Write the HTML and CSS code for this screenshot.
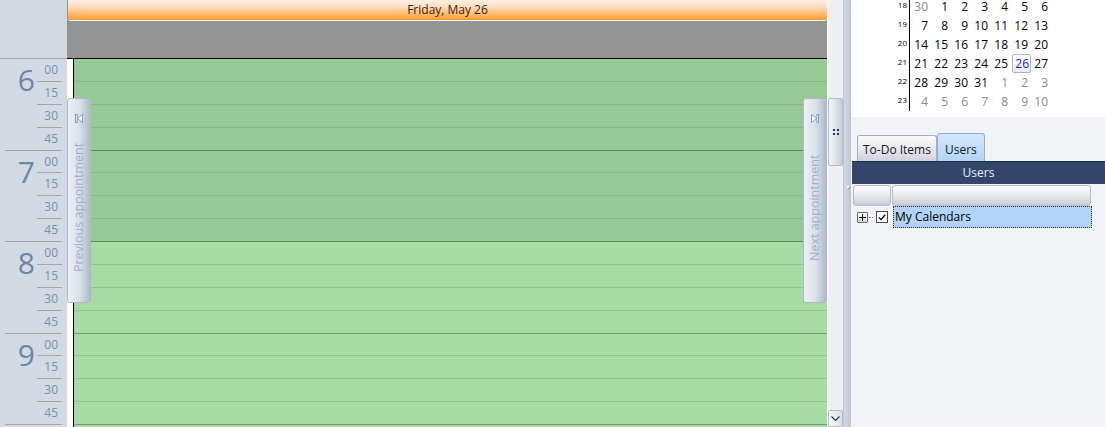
FILE: index.html
```html
<!DOCTYPE html>
<html>
<head>
    <title>Day View</title>
    <link rel="stylesheet" href="styles.css">
</head>
<body>
<div class="app">
    <div class="ruler">
        <div class="ruler-head"></div>
        <div class="hour"><div class="hour-num">6</div><div class="mins"><div class="min">00</div><div class="min">15</div><div class="min">30</div><div class="min">45</div></div></div>
        <div class="hour"><div class="hour-num">7</div><div class="mins"><div class="min">00</div><div class="min">15</div><div class="min">30</div><div class="min">45</div></div></div>
        <div class="hour"><div class="hour-num">8</div><div class="mins"><div class="min">00</div><div class="min">15</div><div class="min">30</div><div class="min">45</div></div></div>
        <div class="hour"><div class="hour-num">9</div><div class="mins"><div class="min">00</div><div class="min">15</div><div class="min">30</div><div class="min">45</div></div></div>
    </div>

    <div class="day">
        <div class="day-head">
            <div class="day-title">Friday, May 26</div>
        </div>
        <div class="day-body">
            <div class="strip"></div>
            <div class="slots">
                <div class="slot off"></div><div class="slot off"></div><div class="slot off"></div><div class="slot off hr"></div>
                <div class="slot off"></div><div class="slot off"></div><div class="slot off"></div><div class="slot off hr"></div>
                <div class="slot"></div><div class="slot"></div><div class="slot"></div><div class="slot hr"></div>
                <div class="slot"></div><div class="slot"></div><div class="slot"></div><div class="slot hr"></div>
                <div class="slot"></div><div class="slot"></div><div class="slot"></div><div class="slot hr"></div>
            </div>

            <div class="nav-btn prev">
                <svg class="nav-ico" width="8" height="9" viewBox="0 0 8 9">
                    <rect x="0.5" y="0.5" width="1.6" height="8" fill="#fff" stroke="#7585a3" stroke-width="0.8"/>
                    <polygon points="7.5,0.5 2.6,4.5 7.5,8.5" fill="#fff" stroke="#7585a3" stroke-width="0.8"/>
                </svg>
                <div class="nav-text">Previous appointment</div>
            </div>
            <div class="nav-btn next">
                <svg class="nav-ico" width="8" height="9" viewBox="0 0 8 9">
                    <polygon points="0.5,0.5 5.4,4.5 0.5,8.5" fill="#fff" stroke="#7585a3" stroke-width="0.8"/>
                    <rect x="5.9" y="0.5" width="1.6" height="8" fill="#fff" stroke="#7585a3" stroke-width="0.8"/>
                </svg>
                <div class="nav-text">Next appointment</div>
            </div>
        </div>
    </div>

    <div class="vscroll">
        <div class="thumb">
            <svg width="6" height="6" viewBox="0 0 6 6">
                <rect x="0" y="0" width="2" height="2" fill="#2e3646"/><rect x="4" y="0" width="2" height="2" fill="#2e3646"/>
                <rect x="0" y="4" width="2" height="2" fill="#2e3646"/><rect x="4" y="4" width="2" height="2" fill="#2e3646"/>
            </svg>
        </div>
        <div class="scroll-btn">
            <svg width="9" height="6" viewBox="0 0 9 6"><polyline points="0.5,0.5 4.5,4.5 8.5,0.5" fill="none" stroke="#3a3a3a" stroke-width="1.2"/></svg>
        </div>
    </div>

    <div class="splitter"><span class="split-dot"></span></div>

    <div class="side">
        <div class="minical">
            <div class="cal-grid">
                <div class="wk">18</div><div class="d other">30</div><div class="d">1</div><div class="d">2</div><div class="d">3</div><div class="d">4</div><div class="d">5</div><div class="d">6</div>
                <div class="wk">19</div><div class="d">7</div><div class="d">8</div><div class="d">9</div><div class="d">10</div><div class="d">11</div><div class="d">12</div><div class="d">13</div>
                <div class="wk">20</div><div class="d">14</div><div class="d">15</div><div class="d">16</div><div class="d">17</div><div class="d">18</div><div class="d">19</div><div class="d">20</div>
                <div class="wk">21</div><div class="d">21</div><div class="d">22</div><div class="d">23</div><div class="d">24</div><div class="d">25</div><div class="d today">26</div><div class="d">27</div>
                <div class="wk">22</div><div class="d">28</div><div class="d">29</div><div class="d">30</div><div class="d">31</div><div class="d other">1</div><div class="d other">2</div><div class="d other">3</div>
                <div class="wk">23</div><div class="d other">4</div><div class="d other">5</div><div class="d other">6</div><div class="d other">7</div><div class="d other">8</div><div class="d other">9</div><div class="d other">10</div>
            </div>
        </div>

        <div class="tabs">
            <div class="tab">To-Do Items</div>
            <div class="tab active">Users</div>
        </div>
        <div class="users-bar">Users</div>
        <div class="grid-head">
            <div class="col-head first"></div>
            <div class="col-head name"></div>
        </div>
        <div class="grid-row">
            <span class="expander">
                <svg width="7" height="7" viewBox="0 0 7 7"><path d="M0 3.5H7M3.5 0V7" stroke="#000" stroke-width="1"/></svg>
            </span>
            <span class="connector"></span>
            <span class="check">
                <svg width="8" height="7" viewBox="0 0 8 7"><polyline points="0.8,3.4 3,5.6 7.2,0.8" fill="none" stroke="#000" stroke-width="1.3"/></svg>
            </span>
            <span class="cal-name">My Calendars</span>
        </div>
    </div>
</div>
</body>
</html>
```

FILE: styles.css
```css
body {
    margin: 0;
    font-family: "Open Sans", "Noto Sans", sans-serif;
    font-size: 12px;
    overflow: hidden;
}
.app {
    display: flex;
    width: 1105px;
    height: 427px;
    overflow: hidden;
}

/* time ruler */
.ruler {
    width: 67px;
    flex: none;
    background: #d2dae4;
}
.ruler-head {
    height: 58px;
    border-bottom: 1px solid #a7abb1;
}
.hour {
    display: flex;
    margin-left: 5px;
    width: 57px;
    height: 91.5px;
    box-sizing: border-box;
    border-bottom: 1px solid #a3a6ab;
}
.hour-num {
    width: 32px;
    box-sizing: border-box;
    padding: 6px 2px 0 0;
    text-align: right;
    font-size: 30px;
    line-height: 30px;
    color: #6f86a7;
}
.mins {
    width: 25px;
}
.min {
    height: 22.875px;
    box-sizing: border-box;
    border-bottom: 1px solid #a3a6ab;
    padding-right: 4px;
    text-align: right;
    line-height: 22px;
    color: #7a90b0;
}
.min:last-child {
    height: 21.5px;
    border-bottom: none;
}

/* day column */
.day {
    width: 760px;
    flex: none;
    display: flex;
    flex-direction: column;
}
.day-head {
    height: 58px;
    border-bottom: 1px solid #000;
    background: #949494;
}
.day-title {
    height: 20px;
    margin-left: 1px;
    border-bottom: 1px solid #fff;
    border-radius: 0 0 3px 3px;
    background: linear-gradient(#fdeee6 0%, #ffe0c4 30%, #ffc27e 62%, #ff9c2c 100%);
    text-align: center;
    line-height: 20px;
    color: #3a1c1c;
}
.day-body {
    flex: 1;
    display: flex;
    position: relative;
    overflow: hidden;
}
.strip {
    width: 6px;
    background: #fff;
    border-right: 1px solid #000;
}
.slots {
    flex: 1;
}
.slot {
    height: 22.875px;
    box-sizing: border-box;
    background: #a7dca4;
    border-bottom: 1px solid #90c48d;
}
.slot.hr {
    border-bottom-color: #6f9d6c;
}
.slot.off {
    background: #96c994;
    border-bottom-color: #84b681;
}
.slot.off.hr {
    border-bottom-color: #5f8a5c;
}

.nav-btn {
    position: absolute;
    top: 39px;
    width: 24px;
    height: 205px;
    box-sizing: border-box;
    border: 1px solid #aeb8c8;
    border-radius: 3px;
    background: linear-gradient(to right, #eef1f6, #d9dfe8 55%, #aebacb);
    display: flex;
    flex-direction: column;
    align-items: center;
    padding-top: 15px;
}
.nav-btn.prev {
    left: 0;
}
.nav-btn.next {
    right: 0;
}
.nav-ico {
    display: block;
}
.nav-text {
    flex: 1;
    writing-mode: vertical-rl;
    transform: rotate(180deg);
    text-align: center;
    font-size: 12.5px;
    line-height: 20px;
    color: #a4b0c5;
    padding-top: 10px;
}

/* scrollbar + splitter */
.vscroll {
    width: 15px;
    flex: none;
    border-left: 1px solid #fff;
    border-right: 1px solid #bcc5d2;
    background: #eef0f4;
    display: flex;
    flex-direction: column;
}
.thumb {
    margin-top: 98px;
    height: 68px;
    box-sizing: border-box;
    border: 1px solid #b3bccb;
    border-radius: 2px;
    background: linear-gradient(to right, #f6f7fa, #dfe4eb 50%, #c5cdd9);
    display: flex;
    align-items: center;
    justify-content: center;
}
.scroll-btn {
    margin-top: auto;
    height: 17px;
    box-sizing: border-box;
    border: 1px solid #b3bccb;
    border-radius: 2px;
    background: linear-gradient(to right, #f6f7fa, #dce1e9);
    display: flex;
    align-items: center;
    justify-content: center;
}
.splitter {
    width: 7px;
    flex: none;
    background: linear-gradient(to right, #d3dae4, #bcc6d3);
}
.split-dot {
    display: block;
    width: 2px;
    height: 2px;
    margin: 186px 0 0 3px;
    background: #fff;
    box-shadow: 1px 1px 0 #8e9aab;
}

/* side panel */
.side {
    flex: 1;
    background: #f2f3f6;
}
.minical {
    height: 117px;
    background: #fff;
    padding-left: 36px;
    overflow: hidden;
}
.cal-grid {
    display: grid;
    grid-template-columns: 23px repeat(7, 20px);
    grid-template-rows: 16px;
    grid-auto-rows: 19px;
}
.wk {
    box-sizing: border-box;
    border-right: 1px solid #000;
    padding-right: 2px;
    text-align: right;
    font-size: 8px;
    line-height: 16px;
    color: #000;
}
.d {
    padding-right: 2px;
    text-align: right;
    line-height: 19px;
    color: #000;
}
/* first row is cut by the top edge */
.cal-grid > .wk:first-child {
    line-height: 10px;
}
.cal-grid > .d:nth-child(-n+8) {
    line-height: 13px;
}
.d.other {
    color: #8a8a8a;
}
.d.today {
    margin: 0 -1px 0 2px;
    box-sizing: border-box;
    border: 1px solid #a6b6cd;
    border-radius: 2px;
    padding-right: 1px;
    line-height: 17px;
    background: linear-gradient(#fff, #e8eef6);
    color: #1a1ae6;
}

.tabs {
    height: 44px;
    display: flex;
    align-items: flex-end;
    padding-left: 6px;
}
.tab {
    height: 26px;
    box-sizing: border-box;
    border: 1px solid #a7afbb;
    border-bottom: none;
    border-radius: 3px 3px 0 0;
    padding: 4px 5px 0 5px;
    line-height: 20px;
    background: linear-gradient(#fbfbfc, #e9eaed 50%, #cfd3da);
    color: #1a1a1a;
}
.tab.active {
    height: 28px;
    padding: 6px 7px 0 7px;
    border-color: #8fb0d6;
    background: linear-gradient(#d3e7fb, #b3d4f6);
}
.users-bar {
    height: 23px;
    margin-left: 1px;
    box-sizing: border-box;
    border-top: 1px solid #1f2d48;
    background: #33466a;
    color: #e6ebf2;
    text-align: center;
    line-height: 21px;
}
.grid-head {
    display: flex;
    gap: 1px;
    padding: 1px 0 0 2px;
}
.col-head {
    height: 21px;
    box-sizing: border-box;
    border: 1px solid #b9bdc5;
    border-radius: 3px;
    background: linear-gradient(#fbfbfc, #eceef1 45%, #c8ccd4);
}
.col-head.first {
    width: 38px;
}
.col-head.name {
    width: 199px;
}
.grid-row {
    display: flex;
    align-items: center;
    height: 22px;
    padding-left: 6px;
}
.expander {
    width: 11px;
    height: 11px;
    box-sizing: border-box;
    border: 1px solid #6a6a6a;
    border-radius: 1px;
    background: linear-gradient(#fff, #d6d6d6);
    display: flex;
    align-items: center;
    justify-content: center;
}
.connector {
    width: 4px;
    margin: 0 3px 0 1px;
    border-top: 1px dotted #8a8a8a;
}
.check {
    width: 12px;
    height: 12px;
    box-sizing: border-box;
    border: 1px solid #4c4c4c;
    background: #fff;
    display: flex;
    align-items: center;
    justify-content: center;
}
.cal-name {
    width: 199px;
    height: 22px;
    margin-left: 5px;
    box-sizing: border-box;
    border: 1px dotted #333;
    background: #b3d4f6;
    padding-left: 1px;
    line-height: 20px;
    color: #000;
}
```
